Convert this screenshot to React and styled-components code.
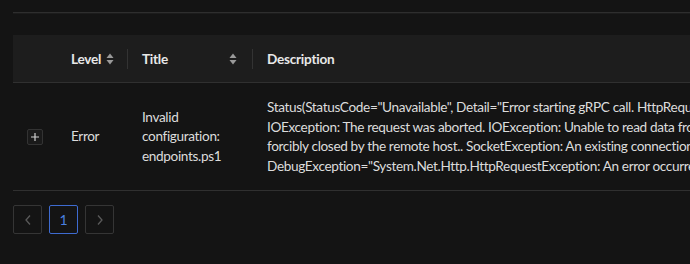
import React from "react";
import styled, { createGlobalStyle } from "styled-components";

const Global = createGlobalStyle`
  html, body { margin: 0; padding: 0; background: #141414; }
  body { font-family: Lato, "Noto Sans", sans-serif; color: #dcdcdc; }
`;

const Page = styled.div`
  width: 690px;
  height: 264px;
  overflow: hidden;
  padding: 12px 0 0 13px;
  box-sizing: border-box;
`;

const TopRule = styled.div`
  width: 1400px;
  height: 1px;
  background: #2e2e2e;
  border-bottom: 1px solid #1c1c1c;
`;

const Table = styled.table`
  margin-top: 21px;
  width: 1400px;
  table-layout: fixed;
  border-collapse: collapse;
  font-size: 13.6px;
  letter-spacing: -0.35px;
`;

const HeadCell = styled.th`
  position: relative;
  height: 47px;
  padding: 0 ${(p) => (p.$bare ? "0" : "15px")};
  background: #1d1d1d;
  border-bottom: 1px solid #303030;
  text-align: left;
  font-weight: 700;
  letter-spacing: -0.25px;
  color: #e8e8e8;
  &::before {
    content: "";
    display: ${(p) => (p.$sep ? "block" : "none")};
    position: absolute;
    left: 0;
    top: 14px;
    height: 20px;
    width: 1px;
    background: #333;
  }
`;

const HeadInner = styled.div`
  display: flex;
  align-items: center;
  justify-content: ${(p) => (p.$spread ? "space-between" : "flex-start")};
  gap: 5px;
  white-space: nowrap;
  & > svg { flex-shrink: 0; }
`;

const Cell = styled.td`
  padding: ${(p) => (p.$bare ? "0" : "15px 15px 14px")};
  border-bottom: 1px solid #303030;
  vertical-align: middle;
  line-height: 19.6px;
  color: #dcdcdc;
  text-align: ${(p) => (p.$center ? "center" : "left")};
`;

const Line = styled.div`
  white-space: nowrap;
`;

const ExpandBtn = styled.button`
  width: 16px;
  height: 16px;
  padding: 0;
  margin: 0;
  border: 1px solid #333;
  border-radius: 2px;
  background: #1a1a1a;
  display: inline-flex;
  align-items: center;
  justify-content: center;
  vertical-align: middle;
`;

const Pager = styled.div`
  display: flex;
  gap: 7px;
  margin-top: 14px;
`;

const PageItem = styled.div`
  width: 29px;
  height: 29px;
  box-sizing: border-box;
  border: 1px solid ${(p) => (p.$active ? "#3e6bd0" : "#353535")};
  border-radius: 2px;
  display: flex;
  align-items: center;
  justify-content: center;
  color: ${(p) => (p.$active ? "#4a80e0" : "#555")};
  font-size: 14px;
`;

const SortIcon = () => (
  <svg width="8" height="12" viewBox="0 0 8 12">
    <path d="M4 0.5 L7.5 5 L0.5 5 Z" fill="#9a9a9a" />
    <path d="M4 11.5 L7.5 7 L0.5 7 Z" fill="#9a9a9a" />
  </svg>
);

const Chevron = ({ dir }) => (
  <svg width="8" height="12" viewBox="0 0 8 12">
    <path
      d={dir === "left" ? "M6 1.5 L2 6 L6 10.5" : "M2 1.5 L6 6 L2 10.5"}
      fill="none"
      stroke="#5a5a5a"
      strokeWidth="1.3"
    />
  </svg>
);

export default function App() {
  return (
    <>
      <Global />
      <Page>
        <TopRule />
        <Table>
          <colgroup>
            <col style={{ width: "43px" }} />
            <col style={{ width: "71px" }} />
            <col style={{ width: "125px" }} />
            <col />
          </colgroup>
          <thead>
            <tr>
              <HeadCell $bare />
              <HeadCell>
                <HeadInner>
                  Level <SortIcon />
                </HeadInner>
              </HeadCell>
              <HeadCell $sep>
                <HeadInner $spread>
                  Title <SortIcon />
                </HeadInner>
              </HeadCell>
              <HeadCell $sep>
                <HeadInner>Description</HeadInner>
              </HeadCell>
            </tr>
          </thead>
          <tbody>
            <tr>
              <Cell $center $bare>
                <ExpandBtn aria-label="expand">
                  <svg width="10" height="10" viewBox="0 0 10 10">
                    <path d="M5 1 V9 M1 5 H9" stroke="#d0d0d0" strokeWidth="1.2" />
                  </svg>
                </ExpandBtn>
              </Cell>
              <Cell>Error</Cell>
              <Cell>Invalid configuration: endpoints.ps1</Cell>
              <Cell>
                <Line>
                  Status(StatusCode="Unavailable", Detail="Error starting gRPC call. HttpRequestException: An error occurred while sending the request.
                </Line>
                <Line>
                  IOException: The request was aborted. IOException: Unable to read data from the transport connection: An existing connection was
                </Line>
                <Line>
                  forcibly closed by the remote host.. SocketException: An existing connection was forcibly closed by the remote host.",
                </Line>
                <Line>
                  DebugException="System.Net.Http.HttpRequestException: An error occurred while sending the request.
                </Line>
              </Cell>
            </tr>
          </tbody>
        </Table>
        <Pager>
          <PageItem>
            <Chevron dir="left" />
          </PageItem>
          <PageItem $active>1</PageItem>
          <PageItem>
            <Chevron dir="right" />
          </PageItem>
        </Pager>
      </Page>
    </>
  );
}
